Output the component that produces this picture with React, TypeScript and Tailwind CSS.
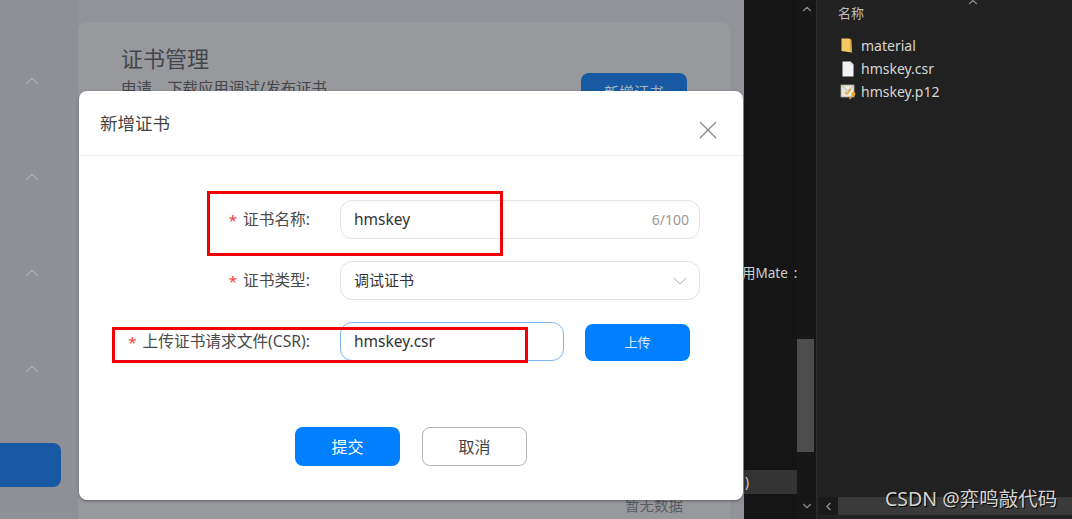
import { ChevronUp, ChevronDown, ChevronLeft, X } from "lucide-react";

const sans = "font-['Noto_Sans','Noto_Sans_CJK_SC',sans-serif]";

function Label({ text }: { text: string }) {
  return (
    <div className="w-[231px] shrink-0 flex justify-end items-center text-[15.700px] pt-[1px] text-[#4a4a4a]">
      <span className="text-[#f23a3a] mr-[6px] text-[15px]">*</span>
      <span>{text}</span>
    </div>
  );
}

function FolderIcon() {
  return (
    <svg width="16" height="16" viewBox="0 0 16 16">
      <path d="M1.500 0.500h8l1.500 1.500 1 12.500-10.500-1.500z" fill="#f3c863" />
      <path d="M10 1.500h1.500v13l-1.500-1z" fill="#d9a83f" />
    </svg>
  );
}

function FileIcon() {
  return (
    <svg width="16" height="16" viewBox="0 0 16 16">
      <path d="M2.500 0.500h8l3 3v12h-11z" fill="#f3f3f5" />
      <path d="M10.500 0.500l3 3h-3z" fill="#c9c9cc" />
    </svg>
  );
}

function CertIcon() {
  return (
    <svg width="18" height="18" viewBox="0 0 18 18">
      <rect x="1" y="2" width="13" height="12" fill="#e9e6dc" stroke="#a5a29a" strokeWidth="0.8" />
      <path d="M2 3l5.500 5L13 3" fill="none" stroke="#b5b1a5" strokeWidth="1" />
      <path d="M5 9l2 2 4-5" fill="none" stroke="#e8a62c" strokeWidth="1.300" />
      <circle cx="13.500" cy="11" r="2" fill="#e8a020" />
      <path d="M12.500 12.500l-3 3.500" stroke="#e8a020" strokeWidth="1.500" />
    </svg>
  );
}

function Background() {
  return (
    <div className="w-[744px] h-full shrink-0 flex bg-[#97989c] text-[#45464a]">
      <div className="w-[78px] shrink-0 h-full bg-[#8f9095] flex flex-col">
        <div className="flex flex-col items-center pt-[70px] gap-[74px] pr-[14px] text-[#a9aaae]">
          <ChevronUp size={22} strokeWidth={1.200} />
          <ChevronUp size={22} strokeWidth={1.200} />
          <ChevronUp size={22} strokeWidth={1.200} />
          <ChevronUp size={22} strokeWidth={1.200} />
        </div>
        <div className="w-[61px] h-[44px] mt-[63px] bg-[#175aa3] rounded-r-lg" />
      </div>
      <div className="flex-1 flex flex-col pt-[22px] pr-[14px] bg-[#929398]">
        <div className="flex-1 bg-[#98999d] rounded-t-lg pl-[43px] pr-[43px] pt-[20px] flex flex-col">
          <div className="flex justify-between">
            <div>
              <div className="text-[22px] leading-[32px]">证书管理</div>
              <div className="text-[15.400px] leading-[22px] mt-[4px]">申请、下载应用调试/发布证书</div>
            </div>
            <div className="w-[106px] h-[38px] mt-[31px] bg-[#175aa3] rounded-lg flex items-center justify-center text-[15px] text-[#a9b4c4]">
              新增证书
            </div>
          </div>
          <div className="mt-auto text-right text-[14.500px] leading-[20px] pb-[4px] text-[#5a5b60] pr-[4px]">暂无数据</div>
        </div>
      </div>
    </div>
  );
}

function Dialog() {
  return (
    <div className="absolute left-[79px] top-[91px] w-[664px] h-[409px] bg-white rounded-lg shadow-[0_1px_3px_rgba(0,0,0,0.4)] flex flex-col">
      <div className="h-[65px] shrink-0 border-b border-[#efefef] flex items-center justify-between pl-[21px] pr-[20px]">
        <span className="text-[17.500px] text-[#444]">新增证书</span>
        <X size={30} strokeWidth={1.100} className="text-[#8a8a8a] mt-[14px]" />
      </div>
      <div className="flex flex-col pt-[44px] gap-[22px]">
        <div className="flex items-center h-[39px]">
          <Label text="证书名称:" />
          <div className="ml-[30px] w-[360px] h-full border border-[#e3e3e5] rounded-xl flex items-center justify-between pl-[13px] pr-[10px]">
            <span className="text-[15.500px] text-[#333]">hmskey</span>
            <span className="text-[14px] text-[#999]">6/100</span>
          </div>
        </div>
        <div className="flex items-center h-[39px]">
          <Label text="证书类型:" />
          <div className="ml-[30px] w-[360px] h-full border border-[#e3e3e5] rounded-xl flex items-center justify-between pl-[13px] pr-[7px]">
            <span className="text-[15px] text-[#333]">调试证书</span>
            <ChevronDown size={24} strokeWidth={1} className="text-[#b4b4b4]" />
          </div>
        </div>
        <div className="flex items-center h-[39px]">
          <Label text="上传证书请求文件(CSR):" />
          <div className="ml-[30px] w-[224px] h-full border-[1.500px] border-[#7db4f5] rounded-xl flex items-center pl-[13px]">
            <span className="text-[15.500px] text-[#333]">hmskey.csr</span>
          </div>
          <div className="ml-[21px] w-[105px] h-[37px] mt-[2px] bg-[#0080ff] rounded-lg flex items-center justify-center text-[13px] text-[#dbeaff]">
            上传
          </div>
        </div>
      </div>
      <div className="flex justify-center gap-[22px] mt-[66px]">
        <div className="w-[105px] h-[39px] bg-[#0080ff] rounded-lg flex items-center justify-center text-[16px] text-white">
          提交
        </div>
        <div className="w-[105px] h-[39px] border border-[#b5b5b5] rounded-lg flex items-center justify-center text-[16px] text-[#444]">
          取消
        </div>
      </div>
    </div>
  );
}

function Explorer() {
  return (
    <div className="flex-1 h-full flex bg-[#151515] relative">
      <div className="w-[53px] shrink-0 flex flex-col text-[13.500px] text-[#cfcfcf]">
        <div className="mt-[263px] -ml-[2px] leading-[20px] whitespace-nowrap">用Mate<span className="ml-[6px]">:</span></div>
        <div className="mt-[187px] h-[24px] bg-[#333] pl-[1px] leading-[24px]">)</div>
      </div>
      <div className="w-[20px] shrink-0 flex flex-col items-center text-[#8a8a8a] bg-[#171717] border-r border-[#2c2c2c] pb-[4px]">
        <ChevronUp size={14} className="mt-[2px]" />
        <div className="w-[17px] h-[113px] bg-[#4d4d4d] mt-[323px] self-start" />
        <ChevronDown size={14} className="mt-[47px]" />
      </div>
      <div className="flex-1 bg-[#212121] flex flex-col text-[#d6d6d6] pb-[4px] relative">
        <ChevronUp size={14} className="absolute left-[149px] -top-[5px] text-[#8a8a8a]" />
        <div className="flex-1 pl-[21px] pt-[3px]">
          <div className="text-[13px] leading-[20px] text-[#bdbdbd]">名称</div>
          <div className="flex flex-col mt-[11px] ml-[2px]">
            <div className="flex items-center gap-[5px] h-[23px]"><FolderIcon /><span className="text-[14px]">material</span></div>
            <div className="flex items-center gap-[5px] h-[23px]"><FileIcon /><span className="text-[14px]">hmskey.csr</span></div>
            <div className="flex items-center gap-[3px] h-[23px]"><CertIcon /><span className="text-[14px]">hmskey.p12</span></div>
          </div>
        </div>
        <div className="h-[18px] flex">
          <div className="w-[19px] ml-[2px] bg-[#1a1a1a] flex items-center justify-center text-[#9a9a9a]">
            <ChevronLeft size={13} />
          </div>
          <div className="flex-1 bg-[#3a3a3a]" />
        </div>
      </div>
    </div>
  );
}

export default function App() {
  return (
    <div className={`relative w-[1072px] h-[519px] overflow-hidden flex ${sans}`}>
      <Background />
      <Explorer />
      <Dialog />
      <div className="absolute left-[207px] top-[191px] w-[296px] h-[65px] border-[3px] border-[#f00000]" />
      <div className="absolute left-[112px] top-[327px] w-[416px] h-[36px] border-[3px] border-[#f00000]" />
      <div className="absolute left-[885px] top-[486px] text-[19.500px] leading-[26px] text-[#d4d4d4] [text-shadow:1px_1px_1px_#000] whitespace-nowrap">
        CSDN @弈鸣敲代码
      </div>
    </div>
  );
}
